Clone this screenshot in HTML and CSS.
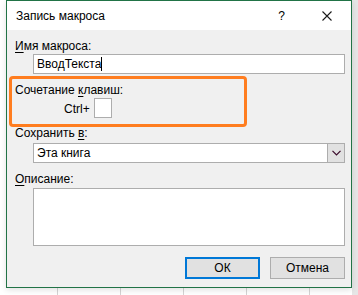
FILE: index.html
```html
<!DOCTYPE html>
<html lang="ru">
<head>
    <meta charset="UTF-8">
    <title>Запись макроса</title>
    <link rel="stylesheet" href="styles.css">
</head>
<body>
    <div class="dialog">
        <div class="titlebar">
            <span class="title">Запись макроса</span>
            <span class="help">?</span>
            <svg class="close" width="10" height="10" viewBox="0 0 10 10">
                <path d="M0.5 0.5 L9.5 9.5 M9.5 0.5 L0.5 9.5" stroke="#1a1a1a" stroke-width="1.1" fill="none"/>
            </svg>
        </div>
        <div class="content">
            <div class="label"><u>И</u>мя макроса:</div>
            <div class="field">ВводТекста<span class="caret"></span></div>

            <div class="label label-gap">Сочетание <u>к</u>лавиш:</div>
            <div class="shortcut">
                <span class="ctrl">Ctrl+</span>
                <span class="key"></span>
            </div>

            <div class="label label-gap3">Сохранить <u>в</u>:</div>
            <div class="field select">
                <span class="select-text">Эта книга</span>
                <span class="select-btn">
                    <svg width="9" height="6" viewBox="0 0 9 6">
                        <path d="M0.5 0.8 L4.5 4.8 L8.5 0.8" stroke="#3a0a2a" stroke-width="1.2" fill="none"/>
                    </svg>
                </span>
            </div>

            <div class="label label-gap"><u>О</u>писание:</div>
            <div class="field area"></div>

            <div class="buttons">
                <button class="btn btn-default">ОК</button>
                <button class="btn">Отмена</button>
            </div>
        </div>
        <div class="highlight"></div>
    </div>
</body>
</html>
```

FILE: styles.css
```css
body {
    margin: 0;
    height: 295px;
    overflow: hidden;
    font-family: 'Liberation Sans', Arial, sans-serif;
    font-size: 12px;
    color: #000;
    background-color: #fff;
    background-image:
        linear-gradient(to right, transparent 352px, #e6e6e6 352px),
        repeating-linear-gradient(to bottom, transparent 0, transparent 28px, #d4d4d4 28px, #d4d4d4 29px, transparent 29px, transparent 40px),
        repeating-linear-gradient(to right, transparent 0, transparent 57px, #d4d4d4 57px, #d4d4d4 58px, transparent 58px, transparent 63px);
    background-size: 100% 100%, 100% 20px, 63px 100%;
}
.dialog {
    position: relative;
    box-sizing: border-box;
    margin-left: 6px;
    width: 346px;
    height: 288px;
    border: 1px solid #217346;
    background-color: #f0f0f0;
    box-shadow: 0 2px 6px rgba(0,0,0,0.12);
}
.titlebar {
    display: flex;
    align-items: center;
    height: 29px;
    background-color: #fff;
    padding-left: 9px;
}
.title {
    flex: 1;
    font-size: 12px;
    padding-top: 1px;
}
.help {
    font-size: 12px;
    margin-right: 37px;
    padding-top: 1px;
}
.close {
    margin-right: 19px;
}
.content {
    padding: 8px 6px 0 8px;
}
.label {
    height: 16px;
    line-height: 16px;
}
.label u {
    text-decoration-thickness: 1px;
    text-underline-offset: 2px;
}
.label-gap {
    margin-top: 8px;
}
.label-gap3 {
    margin-top: 7px;
    margin-bottom: 2px;
}
.field {
    box-sizing: border-box;
    margin-left: 18px;
    height: 20px;
    border: 1px solid #adadad;
    background-color: #fff;
    padding-left: 3px;
    line-height: 18px;
    display: flex;
    align-items: center;
}
.caret {
    display: inline-block;
    width: 1px;
    height: 14px;
    background-color: #000;
}
.shortcut {
    display: flex;
    align-items: center;
    height: 20px;
    padding-left: 49px;
}
.ctrl {
    margin-right: 4px;
    padding-top: 2px;
}
.key {
    box-sizing: border-box;
    width: 18px;
    height: 20px;
    border: 1px solid #adadad;
    background-color: #fff;
}
.select {
    padding-right: 0;
}
.select-text {
    flex: 1;
}
.select-btn {
    box-sizing: border-box;
    width: 17px;
    height: 18px;
    background-color: #e1e1e1;
    border-left: 1px solid #adadad;
    display: flex;
    align-items: center;
    justify-content: center;
}
.area {
    margin-top: 1px;
    height: 58px;
}
.buttons {
    display: flex;
    justify-content: flex-end;
    gap: 10px;
    margin-top: 11px;
}
.btn {
    box-sizing: border-box;
    width: 75px;
    height: 22px;
    border: 1px solid #adadad;
    background-color: #e1e1e1;
    font-family: 'Liberation Sans', Arial, sans-serif;
    font-size: 12px;
    padding: 0;
}
.btn-default {
    border: 2px solid #0078d7;
}
.highlight {
    position: absolute;
    left: 2px;
    top: 75px;
    width: 238px;
    height: 51px;
    border: 3px solid #ff7d1f;
    border-radius: 4px;
    box-sizing: border-box;
}
```
